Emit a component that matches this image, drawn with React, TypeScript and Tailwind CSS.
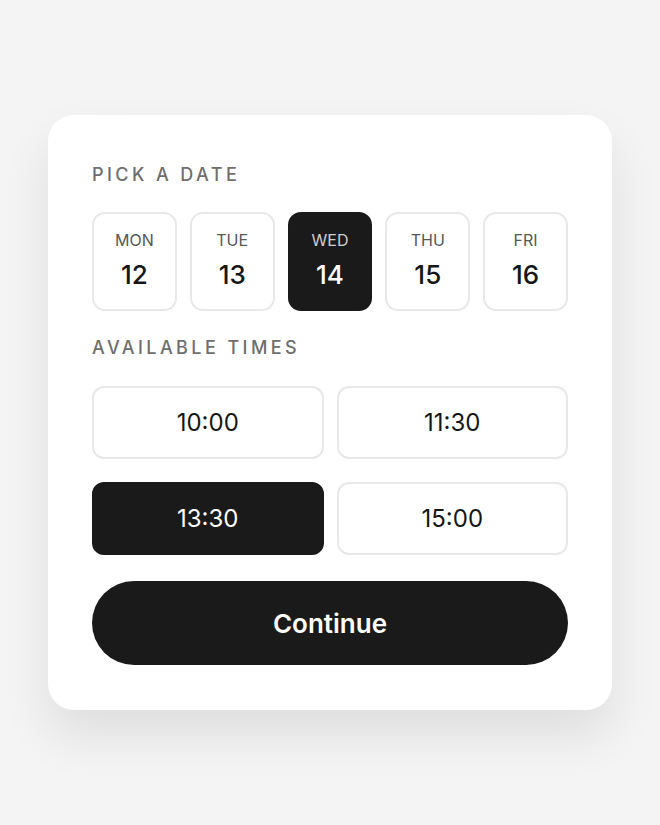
import { useState } from "react";

const days = [
  { d: "MON", n: 12 },
  { d: "TUE", n: 13 },
  { d: "WED", n: 14 },
  { d: "THU", n: 15 },
  { d: "FRI", n: 16 },
];

const times = ["10:00", "11:30", "13:30", "15:00"];

export default function App() {
  const [day, setDay] = useState(14);
  const [time, setTime] = useState("13:30");

  return (
    <div
      className="flex min-h-[825px] w-full items-start justify-center bg-[#f4f4f4] pt-[115px]"
      style={{ fontFamily: "Inter, 'Liberation Sans', sans-serif" }}
    >
      <div className="w-[564px] rounded-[26px] bg-white px-[44px] pt-[47px] pb-[45px] shadow-[0_26px_50px_rgba(0,0,0,0.09)]">
        <h2 className="text-[18px] leading-[26px] font-medium tracking-[0.19em] text-[#6e6e6e]">PICK A DATE</h2>

        <div className="mt-[24px] flex gap-[13px]">
          {days.map((x) => {
            const on = x.n === day;
            return (
              <button
                key={x.n}
                onClick={() => setDay(x.n)}
                className={
                  "flex h-[99px] flex-1 flex-col items-center pt-[16px] rounded-[13px] border-2 " +
                  (on ? "border-[#1a1a1a] bg-[#1a1a1a]" : "border-[#e8e8e8] bg-white")
                }
              >
                <span className={"text-[16px] leading-[20px] " + (on ? "text-[#cfcfcf]" : "text-[#575757]")}>{x.d}</span>
                <span className={"mt-[11px] text-[26px] leading-[28px] font-medium " + (on ? "text-white" : "text-[#161616]")}>
                  {x.n}
                </span>
              </button>
            );
          })}
        </div>

        <h2 className="mt-[24px] text-[18px] leading-[26px] font-medium tracking-[0.19em] text-[#6e6e6e]">AVAILABLE TIMES</h2>

        <div className="mt-[25px] grid grid-cols-2 gap-x-[13px] gap-y-[23px]">
          {times.map((t) => {
            const on = t === time;
            return (
              <button
                key={t}
                onClick={() => setTime(t)}
                className={
                  "h-[73px] rounded-[12px] border-2 text-[24px] " +
                  (on ? "border-[#1a1a1a] bg-[#1a1a1a] text-white" : "border-[#e8e8e8] bg-white text-[#161616]")
                }
              >
                {t}
              </button>
            );
          })}
        </div>

        <button className="mt-[26px] h-[84px] w-full rounded-full bg-[#1a1a1a] text-[26px] font-semibold text-white">
          Continue
        </button>
      </div>
    </div>
  );
}
